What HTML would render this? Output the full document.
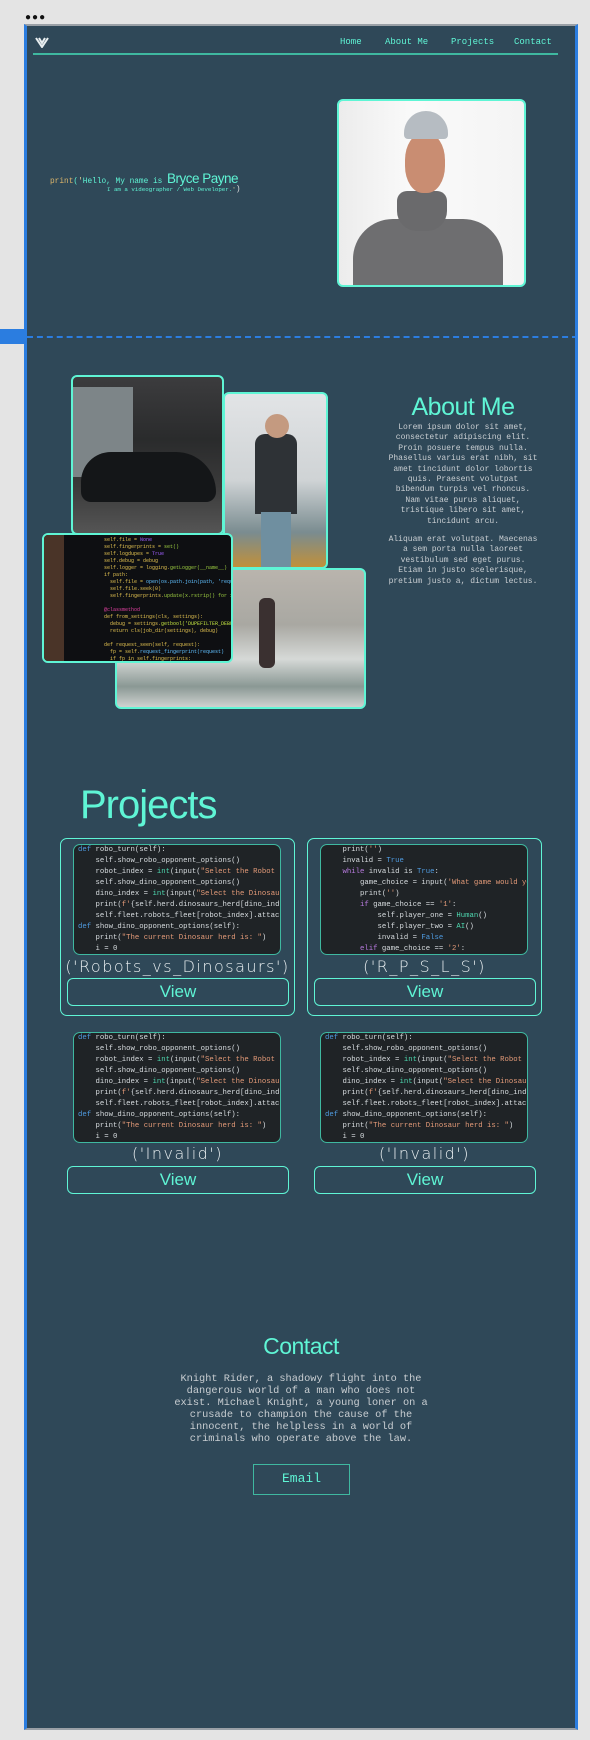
<!DOCTYPE html>
<html><head><meta charset="utf-8">
<style>
*{margin:0;padding:0;box-sizing:border-box}
body{width:590px;height:1740px;background:#e4e4e4;position:relative;overflow:hidden;font-family:"Liberation Sans",sans-serif}
.a{position:absolute}
.mono{font-family:"Liberation Mono","DejaVu Sans Mono",monospace}
.frame{left:24px;top:24px;width:554px;height:1706px;background:#2f4858;border:2px solid #9aa0a6;border-left:3px solid #2b7de0;border-right:3px solid #2b7de0}
.mint{color:#5ff5d5}
.nav{top:37px;font-size:9px;color:#5ff5d5}
.pic{border:2px solid #5ff5d5;border-radius:6px;overflow:hidden}
.para{color:#c9ced2;font-size:8px;line-height:10.4px;text-align:center}
.card{border:1.5px solid #5ff5d5;border-radius:7px}
.code{background:#1f2326;border:1.5px solid #3fb8a0;border-radius:7px;overflow:hidden;font-size:7.3px;line-height:11px;color:#d8dde0;padding:0 0 0 4px;white-space:pre}
.k{color:#4f9be0}.s{color:#e39a78}.g{color:#4ed9b0}.p{color:#b97be0}
.ttl{color:#e8eef0;font-size:16px;text-align:center;letter-spacing:1.5px;font-family:"DejaVu Sans",sans-serif;font-weight:300}
.btn{border:1.5px solid #5ff5d5;border-radius:6px;color:#5ff5d5;font-size:17px;text-align:center;line-height:26px}
.hd{font-family:"Liberation Sans",sans-serif;letter-spacing:-0.5px}
</style></head><body>
<div class="a" style="left:25px;top:12px;font-size:10px;letter-spacing:1px;color:#111">&#9679;&#9679;&#9679;</div>
<div class="a frame"></div>
<div class="a" style="left:0;top:329px;width:24px;height:15px;background:#2b7de0"></div>
<svg class="a" style="left:35px;top:37px" width="14" height="11" viewBox="0 0 14 11"><path d="M1 1 L7 10 L13 1 M4 1 L7 6 L10 1" fill="none" stroke="#e8eef0" stroke-width="2"/></svg>
<div class="a nav mono" style="left:340px">Home</div>
<div class="a nav mono" style="left:385px">About Me</div>
<div class="a nav mono" style="left:451px">Projects</div>
<div class="a nav mono" style="left:514px">Contact</div>
<div class="a" style="left:33px;top:53px;width:525px;height:1.5px;background:#3fb8a0"></div>
<div class="a mono" style="left:50px;top:171px;font-size:7.8px;color:#5ff5d5;white-space:nowrap"><span style="color:#d9b36a">print</span>(<span style="color:#e0d090">'</span>Hello, My name is <span class="hd" style="font-size:13.5px">Bryce Payne</span></div>
<div class="a mono" style="left:107px;top:185px;font-size:5.8px;color:#5ff5d5;white-space:nowrap">I am a videographer / Web Developer.<span style="color:#e0d090">'</span><span style="color:#ddd;font-size:8px">)</span></div>
<div class="a pic" style="left:337px;top:99px;width:189px;height:188px;background:linear-gradient(90deg,#ececec,#fafafa 40%,#f4f4f4)">
 <div class="a" style="left:14px;top:118px;width:150px;height:80px;background:#6e6e70;border-radius:40px 40px 0 0"></div>
 <div class="a" style="left:58px;top:90px;width:50px;height:40px;background:#6a6a6c;border-radius:10px 10px 20px 20px"></div>
 <div class="a" style="left:66px;top:32px;width:40px;height:60px;background:#c98d72;border-radius:45%"></div>
 <div class="a" style="left:65px;top:10px;width:44px;height:28px;background:#b6bcc2;border-radius:22px 22px 4px 4px"></div>
</div>
<div class="a" style="left:27px;top:336px;width:551px;border-top:2px dashed #2b7de0"></div>
<div class="a pic" style="left:223px;top:392px;width:105px;height:177px;background:linear-gradient(180deg,#e2e4e6,#cfd3d5 50%,#7a8c90 80%,#c0903a)">
 <div class="a" style="left:30px;top:40px;width:42px;height:80px;background:#2e3236;border-radius:10px 10px 0 0"></div>
 <div class="a" style="left:36px;top:118px;width:30px;height:60px;background:#6f8fa0"></div>
 <div class="a" style="left:40px;top:20px;width:24px;height:24px;background:#c49a80;border-radius:50%"></div>
</div>
<div class="a pic" style="left:71px;top:375px;width:153px;height:160px;background:linear-gradient(180deg,#3c3c3e,#2a2b2c 40%,#3a3a3a 70%,#555)">
 <div class="a" style="left:0;top:10px;width:60px;height:90px;background:#7d8588"></div>
 <div class="a" style="left:8px;top:75px;width:135px;height:50px;background:#141618;border-radius:30px 40px 10px 10px"></div>
</div>
<div class="a pic" style="left:115px;top:568px;width:251px;height:141px;background:linear-gradient(180deg,#b9b4ad,#a9a8a2 40%,#d6d9d7 65%,#8a9894 85%,#cfd2d0)">
 <div class="a" style="left:142px;top:28px;width:16px;height:70px;background:#3a3030;border-radius:6px"></div>
</div>
<div class="a pic" style="left:42px;top:533px;width:191px;height:130px;background:#0e0f12">
 <div class="a" style="left:0;top:0;width:20px;height:130px;background:#4a3428"></div>
 <div class="a mono" style="left:60px;top:2px;font-size:5px;line-height:7px;white-space:pre;color:#e0c050">self.file = <span style="color:#a060ff">None</span>
self.fingerprints = <span style="color:#9ccc40">set()</span>
self.logdupes = <span style="color:#a060ff">True</span>
self.debug = debug
self.logger = logging.<span style="color:#9ccc40">getLogger(__name__)</span>
if path:
  self.file = <span style="color:#60c0ff">open(os.path.join(path, 'requests.seen'</span>
  self.file.seek(0)
  self.fingerprints.<span style="color:#9ccc40">update(x.rstrip() for x in</span>

<span style="color:#e040a0">@classmethod</span>
def from_settings(cls, settings):
  debug = settings.<span style="color:#c0e040">getbool('DUPEFILTER_DEBUG')</span>
  return cls(job_dir(settings), debug)

def request_seen(self, request):
  fp = self.<span style="color:#60c0ff">request_fingerprint(request)</span>
  if fp in self.fingerprints:
    return True
  self.fingerprints.add(fp)</div>
</div>
<div class="a mint hd" style="left:383px;top:393px;width:160px;text-align:center;font-size:25px">About Me</div>
<div class="a mono para" style="left:388px;top:423px;width:150px">Lorem ipsum dolor sit amet, consectetur adipiscing elit. Proin posuere tempus nulla. Phasellus varius erat nibh, sit amet tincidunt dolor lobortis quis. Praesent volutpat bibendum turpis vel rhoncus. Nam vitae purus aliquet, tristique libero sit amet, tincidunt arcu.<div style="height:8px"></div>Aliquam erat volutpat. Maecenas a sem porta nulla laoreet vestibulum sed eget purus. Etiam in justo scelerisque, pretium justo a, dictum lectus.</div>
<div class="a mint hd" style="left:80px;top:783px;font-size:40px;letter-spacing:-1px">Projects</div>
<div class="a card" style="left:60px;top:838px;width:235px;height:178px"></div>
<div class="a card" style="left:307px;top:838px;width:235px;height:178px"></div>
<div class="a code mono" style="left:73px;top:844px;width:208px;height:111px"><span class="k">def</span> robo_turn(self):
    self.show_robo_opponent_options()
    robot_index = <span class="g">int</span>(input(<span class="s">"Select the Robot</span>
    self.show_dino_opponent_options()
    dino_index = <span class="g">int</span>(input(<span class="s">"Select the Dinosau</span>
    print(<span class="s">f'</span>{self.herd.dinosaurs_herd[dino_ind
    self.fleet.robots_fleet[robot_index].attac
<span class="k">def</span> show_dino_opponent_options(self):
    print(<span class="s">"The current Dinosaur herd is: "</span>)
    i = 0</div>
<div class="a code mono" style="left:320px;top:844px;width:208px;height:111px">    print(<span class="s">''</span>)
    invalid = <span class="k">True</span>
    <span class="p">while</span> invalid is <span class="k">True</span>:
        game_choice = input(<span class="s">'What game would yo</span>
        print(<span class="s">''</span>)
        <span class="p">if</span> game_choice == <span class="s">'1'</span>:
            self.player_one = <span class="g">Human</span>()
            self.player_two = <span class="g">AI</span>()
            invalid = <span class="k">False</span>
        <span class="p">elif</span> game_choice == <span class="s">'2'</span>:</div>
<div class="a ttl" style="left:60px;top:957px;width:235px">('Robots_vs_Dinosaurs')</div>
<div class="a ttl" style="left:307px;top:957px;width:235px">('R_P_S_L_S')</div>
<div class="a btn" style="left:67px;top:978px;width:222px;height:28px">View</div>
<div class="a btn" style="left:314px;top:978px;width:222px;height:28px">View</div>
<div class="a code mono" style="left:73px;top:1032px;width:208px;height:111px"><span class="k">def</span> robo_turn(self):
    self.show_robo_opponent_options()
    robot_index = <span class="g">int</span>(input(<span class="s">"Select the Robot</span>
    self.show_dino_opponent_options()
    dino_index = <span class="g">int</span>(input(<span class="s">"Select the Dinosau</span>
    print(<span class="s">f'</span>{self.herd.dinosaurs_herd[dino_ind
    self.fleet.robots_fleet[robot_index].attac
<span class="k">def</span> show_dino_opponent_options(self):
    print(<span class="s">"The current Dinosaur herd is: "</span>)
    i = 0</div>
<div class="a code mono" style="left:320px;top:1032px;width:208px;height:111px"><span class="k">def</span> robo_turn(self):
    self.show_robo_opponent_options()
    robot_index = <span class="g">int</span>(input(<span class="s">"Select the Robot</span>
    self.show_dino_opponent_options()
    dino_index = <span class="g">int</span>(input(<span class="s">"Select the Dinosau</span>
    print(<span class="s">f'</span>{self.herd.dinosaurs_herd[dino_ind
    self.fleet.robots_fleet[robot_index].attac
<span class="k">def</span> show_dino_opponent_options(self):
    print(<span class="s">"The current Dinosaur herd is: "</span>)
    i = 0</div>
<div class="a ttl" style="left:60px;top:1144px;width:235px">('Invalid')</div>
<div class="a ttl" style="left:307px;top:1144px;width:235px">('Invalid')</div>
<div class="a btn" style="left:67px;top:1166px;width:222px;height:28px">View</div>
<div class="a btn" style="left:314px;top:1166px;width:222px;height:28px">View</div>
<div class="a mint hd" style="left:200px;top:1333px;width:202px;text-align:center;font-size:23px">Contact</div>
<div class="a mono" style="left:170px;top:1374px;width:262px;text-align:center;font-size:10.3px;line-height:11.9px;color:#c9ced2">Knight Rider, a shadowy flight into the dangerous world of a man who does not exist. Michael Knight, a young loner on a crusade to champion the cause of the innocent, the helpless in a world of criminals who operate above the law.</div>
<div class="a mono" style="left:253px;top:1464px;width:97px;height:31px;border:1.5px solid #3fb8a0;color:#5ff5d5;font-size:13px;text-align:center;line-height:28px">Email</div>
</body></html>
